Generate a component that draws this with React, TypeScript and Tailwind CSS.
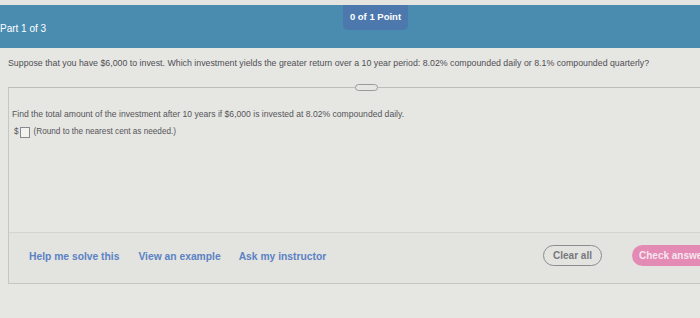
export default function App() {
  return (
    <div className="h-[318px] w-[700px] overflow-hidden bg-[#e6e6e2] font-['Liberation_Sans',Arial,sans-serif]">
      <div className="h-[5px] bg-[#e4e4e1]" />
      {/* header */}
      <div className="relative h-[43px] bg-[#4a8cb0]">
        <div className="absolute left-[343px] top-0 flex h-[25px] w-[65px] items-center justify-center rounded-b-[5px] bg-[#4c78ad] text-[9.5px] font-bold text-white">
          0 of 1 Point
        </div>
        <div className="pt-[16px] text-[10px] text-white">Part 1 of 3</div>
      </div>

      <div className="pl-[8px]">
        <p className="pt-[9px] text-[8.8px] leading-[12px] text-[#4f4f55]">
          Suppose that you have $6,000 to invest. Which investment yields the greater return over a 10 year period: 8.02% compounded daily or 8.1% compounded quarterly?
        </p>
        <div className="relative mt-[18px] h-px bg-[#bdbdbb]">
          <div className="absolute left-[347px] top-[-3px] h-[7px] w-[23px] rounded-full border border-[#9a9a9c] bg-[#e6e6e2]" />
        </div>

        <div className="flex h-[196px] flex-col border-b border-l border-[#c6c6c4]">
          <p className="pl-[3px] pt-[20px] text-[8.6px] leading-[12px] text-[#55555a]">
            Find the total amount of the investment after 10 years if $6,000 is invested at 8.02% compounded daily.
          </p>
          <div className="mt-[6px] flex items-center pl-[5px] text-[8.2px] text-[#55555a]">
            <span>$</span>
            <span className="ml-px h-[11px] w-[10px] border border-[#8a8a8e] bg-[#f2f2f0]" />
            <span className="ml-[4px]">(Round to the nearest cent as needed.)</span>
          </div>

          <div className="mt-auto flex h-[51px] items-center border-t border-[#d4d4d2] bg-[#e3e3e0] pb-[5px] pl-[20px]">
            <span className="mt-[3px] text-[10.3px] font-bold text-[#5a82c4]">Help me solve this</span>
            <span className="ml-[19px] mt-[3px] text-[10.3px] font-bold text-[#5a82c4]">View an example</span>
            <span className="ml-[18px] mt-[3px] text-[10.3px] font-bold text-[#5a82c4]">Ask my instructor</span>
            <span className="ml-auto flex h-[21px] w-[59px] items-center justify-center rounded-full border border-[#8c8c90] text-[10px] font-bold text-[#77777c]">
              Clear all
            </span>
            <span className="ml-[30px] flex h-[21px] w-[68px] shrink-0 items-center overflow-hidden whitespace-nowrap rounded-l-full bg-[#e38ab5] pl-[7px] text-[10px] font-bold text-[#f8e6ef]">
              Check answer
            </span>
          </div>
        </div>
      </div>
    </div>
  );
}
